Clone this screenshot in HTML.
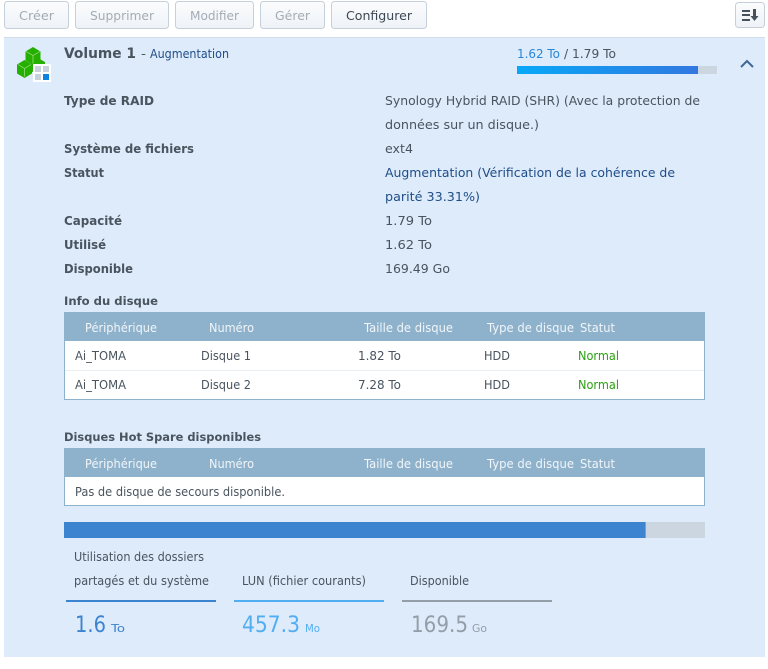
<!DOCTYPE html>
<html lang="fr"><head><meta charset="utf-8"><title>Volume 1</title>
<style>
html,body{margin:0;padding:0;background:#fff;width:768px;height:669px;overflow:hidden}
svg{display:block}
text{font-family:"DejaVu Sans","Liberation Sans",sans-serif;font-size:12px;fill:#49545f}
.b{font-weight:bold;fill:#4a545e}
.h{fill:#f0f5f9}
.l{fill:#1f4d88}
</style></head><body>
<svg width="768" height="669" viewBox="0 0 768 669" xmlns="http://www.w3.org/2000/svg">
<defs>
<linearGradient id="btn" x1="0" y1="0" x2="0" y2="1"><stop offset="0" stop-color="#fbfcfd"/><stop offset="1" stop-color="#eef2f7"/></linearGradient>
<linearGradient id="pg" x1="0" y1="0" x2="1" y2="0"><stop offset="0" stop-color="#08a8f8"/><stop offset="1" stop-color="#3278e0"/></linearGradient>
</defs>
<g fill="url(#btn)" stroke="#c6d0da">
<rect x="4.5" y="1.5" width="64" height="27" rx="3"/>
<rect x="75.5" y="1.5" width="93" height="27" rx="3"/>
<rect x="175.5" y="1.5" width="78" height="27" rx="3"/>
<rect x="260.5" y="1.5" width="64" height="27" rx="3"/>
<rect x="331.5" y="1.5" width="95" height="27" rx="3"/>
<rect x="735.5" y="2.5" width="29" height="25" rx="3"/>
</g>
<text x="19" y="20" textLength="35" lengthAdjust="spacingAndGlyphs" style="fill:#a3acb5">Créer</text>
<text x="90" y="20" textLength="64" lengthAdjust="spacingAndGlyphs" style="fill:#a3acb5">Supprimer</text>
<text x="190" y="20" textLength="49" lengthAdjust="spacingAndGlyphs" style="fill:#a3acb5">Modifier</text>
<text x="275" y="20" textLength="35" lengthAdjust="spacingAndGlyphs" style="fill:#a3acb5">Gérer</text>
<text x="346" y="20" textLength="66" lengthAdjust="spacingAndGlyphs" style="fill:#3d4751">Configurer</text>
<g fill="#46525e">
<rect x="742" y="10" width="8" height="2"/><rect x="742" y="14" width="8" height="2"/><rect x="742" y="19" width="8" height="2"/>
<rect x="753" y="9" width="3" height="8"/><path d="M750.500 16h8l-4 5z"/>
</g>

<rect x="4" y="37" width="761" height="620" fill="#ddebfb"/>
<rect x="4" y="37" width="761" height="1" fill="#d3deea"/>

<g>
<path d="M33 47l7.500 4.500v9l-7.500 4.500l-7.500-4.500v-9z" fill="#25b000"/>
<path d="M38 58l7 4v9l-7 4l-7-4v-9z" fill="#25b000"/>
<path d="M24.500 60l7.500 4.500v9l-7.500 4.500l-7.500-4.500v-9z" fill="#25b000"/>
<path d="M26 51.500l7 4l7-4M33 55.500v8M18 64.500l6.500 4l6.500-4M24.500 68.500v8" fill="none" stroke="#a8e090" stroke-width=".7"/>
<rect x="33" y="64" width="18" height="18" fill="#fff"/>
<rect x="35" y="66" width="6" height="6" fill="#c8d2dc"/><rect x="43" y="66" width="6" height="6" fill="#c8d2dc"/>
<rect x="35" y="74" width="6" height="6" fill="#c8d2dc"/><rect x="43" y="74" width="6" height="6" fill="#0a84e0"/>
</g>

<text x="64" y="58" textLength="72" lengthAdjust="spacingAndGlyphs" class="b" style="font-size:14.500px">Volume 1</text>
<text x="141" y="58" textLength="5" lengthAdjust="spacingAndGlyphs">-</text>
<text x="150" y="58" textLength="79" lengthAdjust="spacingAndGlyphs" class="l">Augmentation</text>
<text x="517" y="58" textLength="43" lengthAdjust="spacingAndGlyphs" style="fill:#2a86d8">1.62 To</text>
<text x="564" y="58" textLength="52" lengthAdjust="spacingAndGlyphs">/ 1.79 To</text>
<rect x="517" y="66" width="200" height="8" fill="#ccd6e0"/>
<rect x="517" y="66" width="181" height="8" fill="url(#pg)"/>
<path d="M741 67l6-6l6 6" fill="none" stroke="#3f6796" stroke-width="2"/>

<text x="64" y="105" textLength="90" lengthAdjust="spacingAndGlyphs" class="b">Type de RAID</text>
<text x="64" y="153" textLength="130" lengthAdjust="spacingAndGlyphs" class="b">Système de fichiers</text>
<text x="64" y="177" textLength="40" lengthAdjust="spacingAndGlyphs" class="b">Statut</text>
<text x="64" y="225" textLength="58" lengthAdjust="spacingAndGlyphs" class="b">Capacité</text>
<text x="64" y="249" textLength="42" lengthAdjust="spacingAndGlyphs" class="b">Utilisé</text>
<text x="64" y="273" textLength="69" lengthAdjust="spacingAndGlyphs" class="b">Disponible</text>

<text x="385" y="105" textLength="315" lengthAdjust="spacingAndGlyphs">Synology Hybrid RAID (SHR) (Avec la protection de</text>
<text x="385" y="129" textLength="154" lengthAdjust="spacingAndGlyphs">données sur un disque.)</text>
<text x="385" y="153" textLength="28" lengthAdjust="spacingAndGlyphs">ext4</text>
<text x="385" y="177" textLength="290" lengthAdjust="spacingAndGlyphs" class="l">Augmentation (Vérification de la cohérence de</text>
<text x="385" y="201" textLength="95" lengthAdjust="spacingAndGlyphs" class="l">parité 33.31%)</text>
<text x="385" y="225" textLength="47" lengthAdjust="spacingAndGlyphs">1.79 To</text>
<text x="385" y="249" textLength="47" lengthAdjust="spacingAndGlyphs">1.62 To</text>
<text x="385" y="273" textLength="65" lengthAdjust="spacingAndGlyphs">169.49 Go</text>

<text x="64" y="305" textLength="94" lengthAdjust="spacingAndGlyphs" class="b" style="font-size:11.500px">Info du disque</text>
<rect x="64.500" y="312.500" width="640" height="87" fill="#fff" stroke="#8fb2cc"/>
<rect x="64" y="312" width="641" height="29" fill="#8fb2cc"/>
<rect x="65" y="370" width="639" height="1" fill="#e9eef2"/>
<text x="85" y="332" textLength="72" lengthAdjust="spacingAndGlyphs" class="h">Périphérique</text>
<text x="209" y="332" textLength="45" lengthAdjust="spacingAndGlyphs" class="h">Numéro</text>
<text x="364" y="332" textLength="89" lengthAdjust="spacingAndGlyphs" class="h">Taille de disque</text>
<text x="487" y="332" textLength="87" lengthAdjust="spacingAndGlyphs" class="h">Type de disque</text>
<text x="580" y="332" textLength="35" lengthAdjust="spacingAndGlyphs" class="h">Statut</text>
<text x="75" y="360" textLength="51" lengthAdjust="spacingAndGlyphs">Ai_TOMA</text>
<text x="201" y="360" textLength="50" lengthAdjust="spacingAndGlyphs">Disque 1</text>
<text x="358" y="360" textLength="43" lengthAdjust="spacingAndGlyphs">1.82 To</text>
<text x="484" y="360" textLength="26" lengthAdjust="spacingAndGlyphs">HDD</text>
<text x="578" y="360" textLength="41" lengthAdjust="spacingAndGlyphs" style="fill:#2aa012">Normal</text>
<text x="75" y="389" textLength="51" lengthAdjust="spacingAndGlyphs">Ai_TOMA</text>
<text x="201" y="389" textLength="50" lengthAdjust="spacingAndGlyphs">Disque 2</text>
<text x="358" y="389" textLength="43" lengthAdjust="spacingAndGlyphs">7.28 To</text>
<text x="484" y="389" textLength="26" lengthAdjust="spacingAndGlyphs">HDD</text>
<text x="578" y="389" textLength="41" lengthAdjust="spacingAndGlyphs" style="fill:#2aa012">Normal</text>

<text x="64" y="441" textLength="197" lengthAdjust="spacingAndGlyphs" class="b" style="font-size:11.500px">Disques Hot Spare disponibles</text>
<rect x="64.500" y="448.500" width="640" height="57" fill="#fff" stroke="#8fb2cc"/>
<rect x="64" y="448" width="641" height="29" fill="#8fb2cc"/>
<text x="85" y="468" textLength="72" lengthAdjust="spacingAndGlyphs" class="h">Périphérique</text>
<text x="209" y="468" textLength="45" lengthAdjust="spacingAndGlyphs" class="h">Numéro</text>
<text x="364" y="468" textLength="89" lengthAdjust="spacingAndGlyphs" class="h">Taille de disque</text>
<text x="487" y="468" textLength="87" lengthAdjust="spacingAndGlyphs" class="h">Type de disque</text>
<text x="580" y="468" textLength="35" lengthAdjust="spacingAndGlyphs" class="h">Statut</text>
<text x="75" y="496" textLength="210" lengthAdjust="spacingAndGlyphs">Pas de disque de secours disponible.</text>

<rect x="64" y="522" width="641" height="16" fill="#ccd6e0"/>
<rect x="64" y="522" width="581" height="16" fill="#3c84cf"/>
<rect x="645" y="522" width="1" height="16" fill="#52aef2"/>

<text x="74" y="561" textLength="130" lengthAdjust="spacingAndGlyphs">Utilisation des dossiers</text>
<text x="74" y="585" textLength="135" lengthAdjust="spacingAndGlyphs">partagés et du système</text>
<text x="242" y="585" textLength="124" lengthAdjust="spacingAndGlyphs">LUN (fichier courants)</text>
<text x="410" y="585" textLength="59" lengthAdjust="spacingAndGlyphs">Disponible</text>
<rect x="66" y="600" width="150" height="2" fill="#3c84cf"/>
<rect x="234" y="600" width="150" height="2" fill="#52aef2"/>
<rect x="402" y="600" width="150" height="2" fill="#949ea8"/>
<text x="75" y="632" textLength="31" lengthAdjust="spacingAndGlyphs" style="font-size:22px;fill:#3c84cf">1.6</text>
<text x="111" y="632" textLength="14" lengthAdjust="spacingAndGlyphs" style="font-size:10.500px;fill:#3c84cf">To</text>
<text x="242" y="632" textLength="58" lengthAdjust="spacingAndGlyphs" style="font-size:22px;fill:#52aef2">457.3</text>
<text x="305" y="632" textLength="15" lengthAdjust="spacingAndGlyphs" style="font-size:10.500px;fill:#52aef2">Mo</text>
<text x="411" y="632" textLength="57" lengthAdjust="spacingAndGlyphs" style="font-size:22px;fill:#949ea8">169.5</text>
<text x="472" y="632" textLength="15" lengthAdjust="spacingAndGlyphs" style="font-size:10.500px;fill:#949ea8">Go</text>
</svg>
</body></html>
